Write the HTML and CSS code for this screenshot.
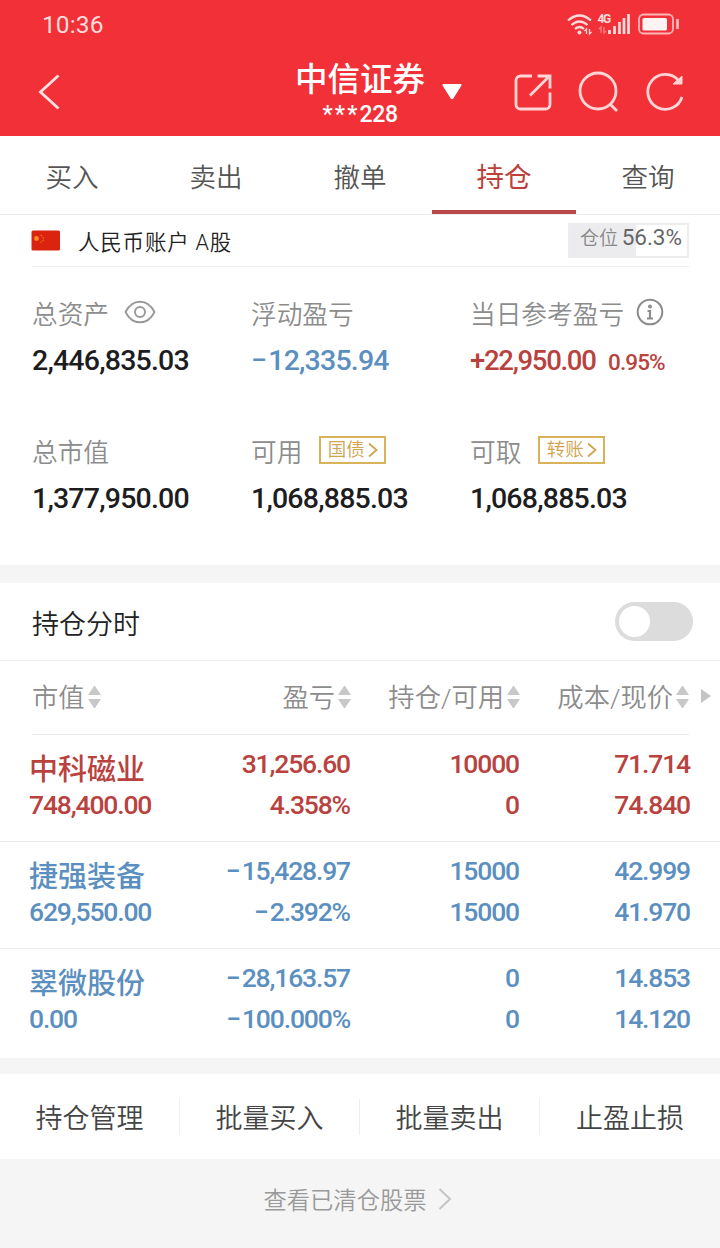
FILE: index.html
```html
<!DOCTYPE html>
<html lang="zh-CN">
<head>
    <meta charset="UTF-8">
    <meta name="viewport" content="width=device-width, initial-scale=1.0">
    <title>持仓</title>
    <link rel="stylesheet" href="styles.css">
</head>
<body>

    <!-- 顶部 -->
    <header class="top">
        <div class="status">
            <span class="time">10:36</span>
            <svg class="signals" width="114" height="26" viewBox="0 0 114 26" fill="none" stroke="#ffdcdc">
                <path d="M2 8.500q11.500-10 23 0M5.500 13q8-7 16 0M9 17q4.500-4 9 0" stroke-width="2.200"/>
                <circle cx="13.500" cy="20.500" r="2" fill="#ffdcdc" stroke="none"/>
                <path d="M20.500 22v-5l-2 2M23.500 17v5l2-2" stroke-width="1.300"/>
                <text x="31.500" y="10.500" class="net">4G</text>
                <path d="M35 21v-6l-2 2M38 15v6l2-2" stroke="#ff8086" stroke-width="1.300"/>
                <path d="M43.500 22v-4M48.500 22v-8M53.500 22v-12M58 22V6M62.500 22V2" stroke-width="2.700"/>
                <rect x="73" y="2.500" width="34" height="19" rx="4.500" stroke-width="1.800" stroke="#ffb5b8"/>
                <rect x="76.500" y="6" width="24.500" height="12.500" rx="1.500" fill="#fff3f3" stroke="none"/>
                <path d="M111.500 7v10" stroke-width="2.600" stroke="#ffc4c6"/>
            </svg>
        </div>
        <div class="nav">
            <svg class="back" width="24" height="40" viewBox="0 0 24 40" fill="none" stroke="#ffe0e0" stroke-width="2.800">
                <path d="M21.500 3.500L3.500 20l18 16.500"/>
            </svg>
            <div class="broker">
                <h1>中信证券</h1>
                <p><span class="stars">***</span>228</p>
            </div>
            <svg class="caret" width="20" height="16" viewBox="0 0 20 16">
                <path d="M1.500 0h17a1 1 0 0 1 .8 1.700l-8 12.800a1.500 1.500 0 0 1-2.600 0L.7 1.700A1 1 0 0 1 1.500 0z" fill="#fff"/>
            </svg>
            <div class="tools">
                <svg width="40" height="40" viewBox="0 0 40 40" fill="none" stroke="#ffd5d6" stroke-width="2.800">
                    <path d="M19 4H7.500A4.500 4.500 0 0 0 3 8.500v24A4.500 4.500 0 0 0 7.500 37h25a4.500 4.500 0 0 0 4.500-4.500V20.500"/>
                    <path d="M17 23.500L36.500 4M24.500 4H37v12.500"/>
                </svg>
                <svg width="42" height="42" viewBox="0 0 42 42" fill="none" stroke="#ffd5d6" stroke-width="2.800">
                    <circle cx="20" cy="20" r="18"/>
                    <path d="M32 33l7 7"/>
                </svg>
                <svg width="42" height="42" viewBox="0 0 42 42" fill="none" stroke="#ffd5d6" stroke-width="2.800">
                    <path d="M37 26A17.500 17.500 0 1 1 34 10"/>
                    <path d="M37 5v8h-9z" fill="#ffd5d6" stroke-width="1"/>
                </svg>
            </div>
        </div>
    </header>

    <nav class="tabs">
        <a>买入</a>
        <a>卖出</a>
        <a>撤单</a>
        <a class="active">持仓</a>
        <a>查询</a>
    </nav>

    <!-- 账户 -->
    <section class="account">
        <svg width="30" height="21" viewBox="0 0 30 21">
            <rect x=".5" y=".5" width="28.500" height="20" rx="1.500" fill="#da2410"/>
            <circle cx="5.500" cy="8.500" r="2.400" fill="#ff8a26"/>
            <path d="M9.500 5l1.500 1M11.500 7.500l1.500.5M11.500 10.500l1.500-.3M9.500 12.500l1.500-.8" stroke="#f0701e" stroke-width="1.200"/>
        </svg>
        <span class="account-name">人民币账户 A股</span>
        <span class="ratio">仓位<b>56.3%</b></span>
    </section>

    <section class="assets">
        <div>
            <div class="label">总资产
                <svg class="eye" width="32" height="24" viewBox="0 0 32 24" fill="none" stroke="#999" stroke-width="1.900">
                    <path d="M1.500 12C5 5 10 1.700 16 1.700S27 5 30.500 12C27 19 22 22.300 16 22.300S5 19 1.500 12z"/>
                    <circle cx="16" cy="12" r="5"/>
                </svg>
            </div>
            <div class="num">2,446,835.03</div>
        </div>
        <div>
            <div class="label">浮动盈亏</div>
            <div class="num down"><i>−</i>12,335.94</div>
        </div>
        <div>
            <div class="label">当日参考盈亏
                <svg class="info" width="28" height="28" viewBox="0 0 28 28" fill="none" stroke="#8c8c8c" stroke-width="2">
                    <circle cx="14" cy="14" r="12.300"/>
                    <circle cx="14" cy="8.500" r="2" fill="#8c8c8c" stroke="none"/>
                    <path d="M11.500 13H14v7.500M11 20.500h6" stroke-width="2.200"/>
                </svg>
            </div>
            <div class="num up plus">+22,950.00 <small>0.95%</small></div>
        </div>
        <div>
            <div class="label">总市值</div>
            <div class="num">1,377,950.00</div>
        </div>
        <div>
            <div class="label">可用
                <span class="tag">国债<svg width="10" height="16" viewBox="0 0 10 16"><path d="M1 1.500L8.500 8 1 14.500"/></svg></span>
            </div>
            <div class="num">1,068,885.03</div>
        </div>
        <div>
            <div class="label">可取
                <span class="tag">转账<svg width="10" height="16" viewBox="0 0 10 16"><path d="M1 1.500L8.500 8 1 14.500"/></svg></span>
            </div>
            <div class="num">1,068,885.03</div>
        </div>
    </section>

    <section class="minute">
        <span>持仓分时</span>
        <span class="switch"></span>
    </section>

    <!-- 持仓列表 -->
    <section class="holdings">
        <div class="row head">
            <div>市值<span class="sort"></span></div>
            <div>盈亏<span class="sort"></span></div>
            <div>持仓/可用<span class="sort"></span></div>
            <div>成本/现价<span class="sort"></span></div>
            <span class="more"></span>
        </div>
        <div class="row up">
            <div><strong>中科磁业</strong><span>748,400.00</span></div>
            <div><span>31,256.60</span><span>4.358%</span></div>
            <div><span>10000</span><span>0</span></div>
            <div><span>71.714</span><span>74.840</span></div>
        </div>
        <div class="row down">
            <div><strong>捷强装备</strong><span>629,550.00</span></div>
            <div><span><i>−</i>15,428.97</span><span><i>−</i>2.392%</span></div>
            <div><span>15000</span><span>15000</span></div>
            <div><span>42.999</span><span>41.970</span></div>
        </div>
        <div class="row down">
            <div><strong>翠微股份</strong><span>0.00</span></div>
            <div><span><i>−</i>28,163.57</span><span><i>−</i>100.000%</span></div>
            <div><span>0</span><span>0</span></div>
            <div><span>14.853</span><span>14.120</span></div>
        </div>
    </section>

    <div class="actions">
        <a>持仓管理</a>
        <a>批量买入</a>
        <a>批量卖出</a>
        <a>止盈止损</a>
    </div>

    <footer class="cleared">
        查看已清仓股票
        <svg width="14" height="24" viewBox="0 0 14 24" fill="none" stroke="#c4c4c4" stroke-width="2">
            <path d="M1.500 2L12 12 1.500 22"/>
        </svg>
    </footer>

</body>
</html>
```

FILE: styles.css
```css
* {
    box-sizing: border-box;
}
body {
    margin: 0;
    width: 720px;
    height: 1248px;
    display: flex;
    flex-direction: column;
    overflow: hidden;
    background: #fff;
    color: #333;
    font-family: Roboto, "Noto Sans CJK SC", sans-serif;
    font-weight: 350;
}
svg {
    flex: none;
}
i {
    font-style: normal;
    margin-right: 2px;
}

/* 顶部红色区域 */
.top {
    height: 136px;
    background: #f23038;
    color: #fff;
}
.status {
    height: 48px;
    display: flex;
    align-items: center;
    justify-content: space-between;
    padding: 1px 40px 0 42px;
}
.time {
    font-size: 24.500px;
    line-height: 28px;
    font-weight: 400;
    letter-spacing: 0.1px;
    color: #ffdcdc;
}
.net {
    font-size: 12px;
    font-weight: 700;
    letter-spacing: -1.500px;
    fill: #ffdcdc;
    stroke: none;
}
.nav {
    height: 88px;
    display: grid;
    grid-template-columns: 258px 130px 54px 242px;
    align-items: center;
    padding-left: 37px;
}
.broker {
    padding-top: 5px;
    text-align: center;
}
.broker h1 {
    margin: 0;
    font-size: 32.500px;
    line-height: 40px;
    font-weight: 500;
    white-space: nowrap;
}
.broker p {
    margin: 0;
    font-size: 23px;
    line-height: 30px;
    font-weight: 500;
    letter-spacing: -0.4px;
}
.stars {
    letter-spacing: 2.200px;
}
.caret {
    justify-self: center;
}
.tools {
    display: flex;
    align-items: center;
    gap: 25px;
    padding-left: 34px;
}

/* 标签栏 */
.tabs {
    height: 79px;
    display: grid;
    grid-template-columns: repeat(5, 1fr);
    border-bottom: 1px solid #ececec;
}
.tabs a {
    font-size: 26.500px;
    line-height: 83px;
    height: 78px;
    text-align: center;
    color: #555;
}
.tabs .active {
    color: #bf3f3a;
    font-weight: 400;
    font-size: 27.500px;
    border-bottom: 4px solid #b9484a;
}

/* 账户 */
.account {
    height: 52px;
    margin: 0 31px 0 32px;
    display: flex;
    align-items: center;
    border-bottom: 1px solid #eee;
}
.account svg {
    margin-left: -1px;
}
.account-name {
    margin: -1px 0 0 17px;
    font-size: 21.500px;
    letter-spacing: 0.8px;
    color: #222;
}
.ratio {
    margin-left: auto;
    width: 121px;
    height: 35px;
    padding: 0 5px 0 10px;
    display: flex;
    justify-content: space-between;
    border: 2px solid #ededf0;
    background: linear-gradient(90deg, #ececee 66px, #fff 66px);
    font-size: 19px;
    line-height: 27px;
    color: #888;
}
.ratio b {
    font-size: 22.500px;
    line-height: 25px;
    font-weight: 400;
    color: #666;
}

/* 资产 */
.assets {
    height: 298px;
    padding: 23px 0 0 32px;
    display: grid;
    grid-template-columns: 219px 219px 1fr;
    grid-auto-rows: 138px;
}
.label {
    height: 44px;
    display: flex;
    align-items: center;
    font-size: 25.700px;
    color: #8c8c8c;
}
.eye {
    margin-left: 15px;
}
.info {
    margin-left: 12px;
}
.num {
    height: 54px;
    line-height: 54px;
    font-size: 28.500px;
    font-weight: 500;
    letter-spacing: -0.8px;
    color: #1d1d1f;
    white-space: nowrap;
}
.num small {
    font-size: 22.500px;
    margin-left: 5px;
    letter-spacing: -0.9px;
}
.num.plus {
    font-size: 27.500px;
    letter-spacing: -1.300px;
}
.num.plus small {
    margin-left: 7px;
}
.up, .num.up {
    color: #b9423e;
}
.down, .num.down {
    color: #5b8fc0;
}
.tag {
    margin-left: 17px;
    width: 67px;
    height: 28px;
    display: flex;
    align-items: center;
    justify-content: center;
    gap: 3px;
    border: 2px solid #d9b25c;
    font-size: 18.500px;
    line-height: 26px;
    color: #d1a44e;
}
.tag svg {
    fill: none;
    stroke: #d1a44e;
    stroke-width: 1.800;
}

/* 分时开关 */
.minute {
    height: 96px;
    border-top: 18px solid #f5f5f5;
    border-bottom: 1px solid #eee;
    padding: 0 27px 0 32px;
    display: flex;
    align-items: center;
    justify-content: space-between;
    font-size: 27px;
    color: #222;
}
.minute span:first-child {
    padding-top: 2px;
}
.switch {
    width: 78px;
    height: 39px;
    border-radius: 20px;
    padding: 4px;
    background: #dcdcdc;
}
.switch::before {
    content: "";
    display: block;
    width: 31px;
    height: 31px;
    border-radius: 50%;
    background: #fff;
}

/* 持仓表格 */
.row {
    height: 107px;
    padding: 8px 0 0 29px;
    display: grid;
    grid-template-columns: 161px 160px 169px 171px;
    border-bottom: 1px solid #ececec;
    font-size: 26.500px;
    font-weight: 500;
    letter-spacing: -1.150px;
}
.row:last-child {
    border-bottom: none;
    height: 109px;
}
.row > div {
    display: flex;
    flex-direction: column;
    text-align: right;
}
.row > div:first-child {
    text-align: left;
}
.row > div > span {
    line-height: 41px;
}
.row strong {
    height: 41px;
    line-height: 54px;
    font-size: 29px;
    font-weight: 500;
    letter-spacing: 0;
}
.row.head {
    height: 74px;
    margin: 0 31px 0 32px;
    padding: 0;
    grid-template-columns: 158px 161px 169px 169px 22px;
    align-items: center;
    font-size: 26.300px;
    font-weight: 350;
    letter-spacing: 0;
    color: #8c8c8c;
}
.row.head > div {
    flex-direction: row;
    align-items: center;
    justify-content: flex-end;
    gap: 3px;
    height: 36px;
    line-height: 36px;
    white-space: nowrap;
}
.row.head > div:first-child {
    justify-content: flex-start;
}
.row.head .sort {
    height: 22px;
    width: 13px;
    margin-bottom: 2px;
    display: flex;
    flex-direction: column;
    justify-content: space-between;
}
.sort::before, .sort::after {
    content: "";
    border: 6.500px solid transparent;
}
.sort::before {
    border-top: none;
    border-bottom: 9px solid #c8c8c8;
}
.sort::after {
    border-bottom: none;
    border-top: 9px solid #c8c8c8;
}
.more {
    justify-self: end;
    margin-bottom: 4px;
    border: 7px solid transparent;
    border-left: 10px solid #c4c4c4;
    border-right: none;
}

/* 底部操作 */
.actions {
    height: 101px;
    border-top: 16px solid #f5f5f5;
    display: grid;
    grid-template-columns: repeat(4, 1fr);
    align-items: center;
}
.actions a {
    height: 36px;
    line-height: 40px;
    text-align: center;
    font-size: 27px;
    color: #444;
    border-right: 1px solid #eee;
}
.actions a:last-child {
    border-right: none;
}
.cleared {
    flex: 1;
    padding: 0 5px 10px 0;
    display: flex;
    align-items: center;
    justify-content: center;
    gap: 11px;
    background: #f5f5f5;
    font-size: 23.300px;
    color: #999;
}
```
